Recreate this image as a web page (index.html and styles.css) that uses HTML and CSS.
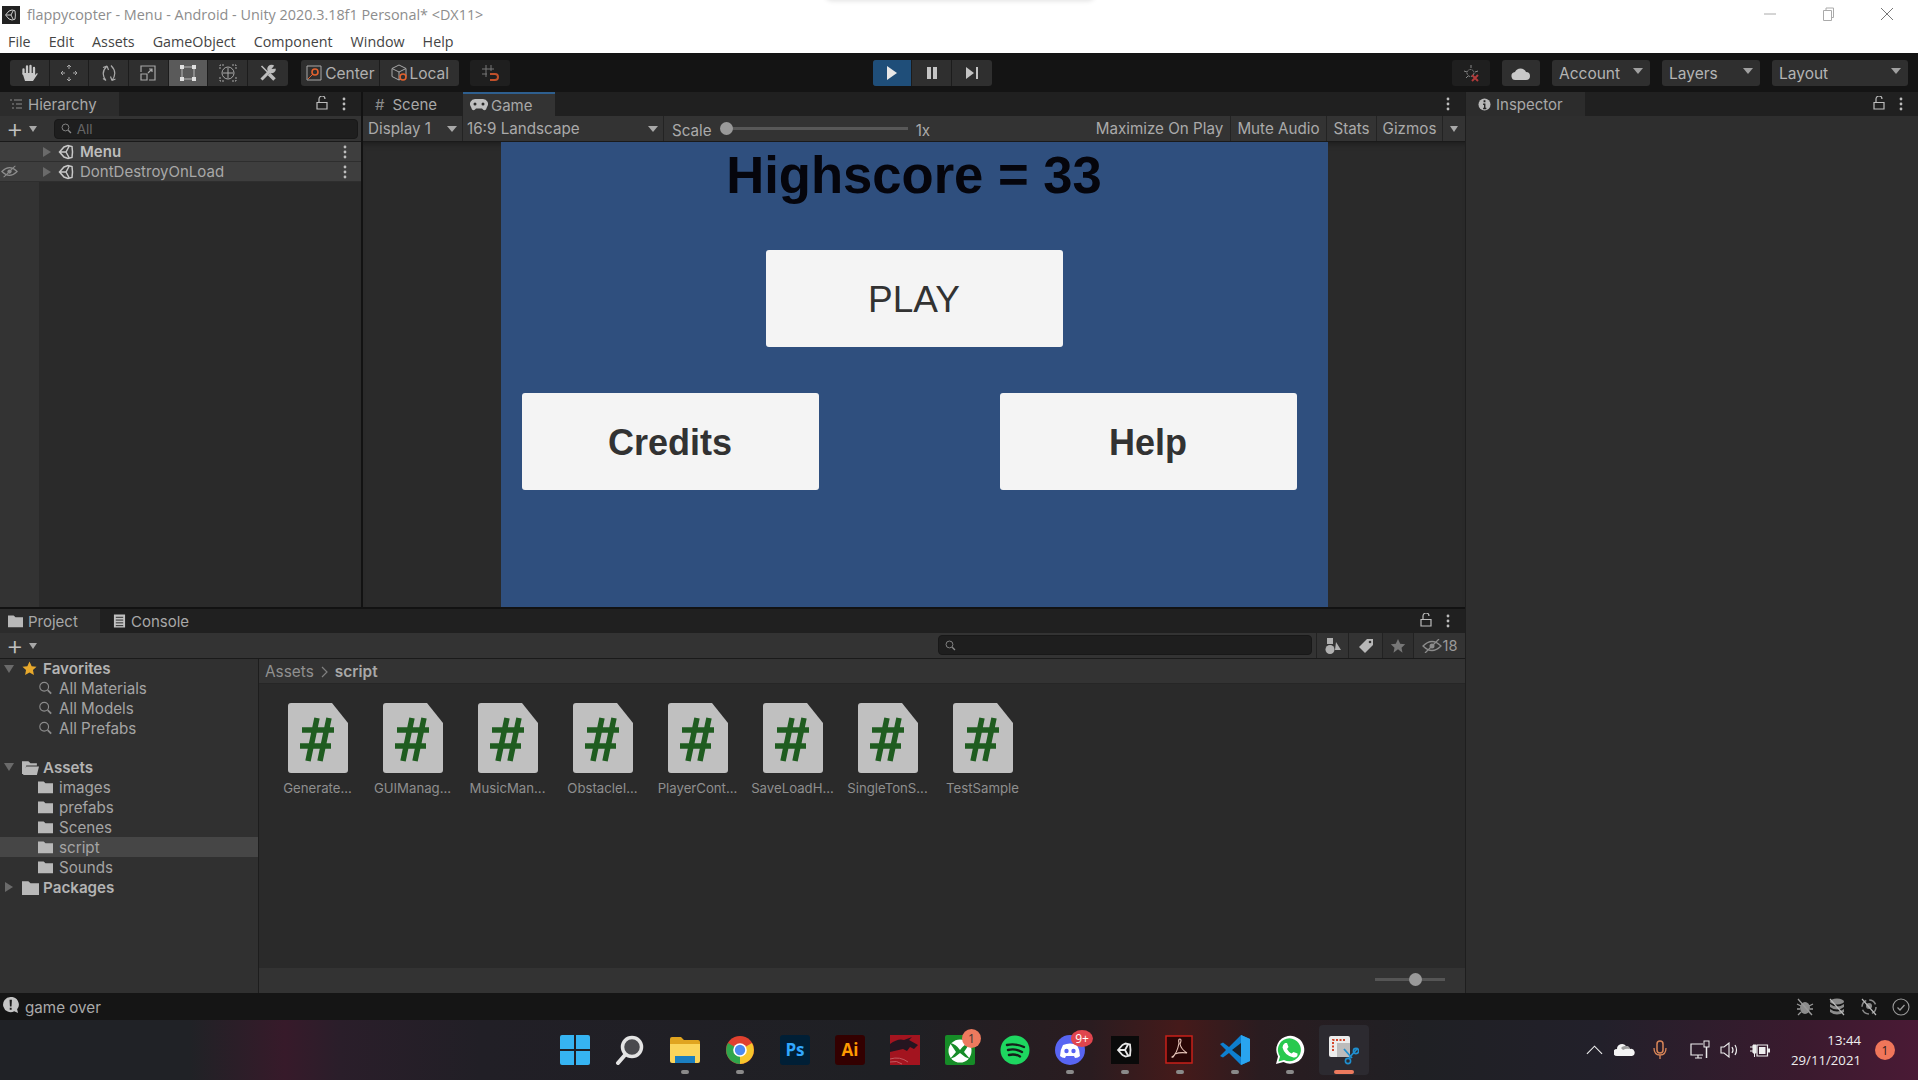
FILE: index.html
```html
<!DOCTYPE html>
<html lang="en">
<head>
  <meta charset="UTF-8" />
  <title>flappycopter - Menu - Android - Unity 2020.3.18f1 Personal* &lt;DX11&gt;</title>
  <link rel="stylesheet" href="styles.css">
</head>
<body>
  <svg class="defs" width="0" height="0">
    <symbol id="folder" viewBox="0 0 16 14"><path d="M0 1h6l2 2h8v11H0z" fill="#b8b8b8"/></symbol>
    <symbol id="find" viewBox="0 0 16 16"><circle cx="6.5" cy="6.5" r="5" fill="none" stroke="#8c8c8c" stroke-width="1.3"/><path d="M10.5 10.5l4 4" stroke="#8c8c8c" stroke-width="2"/></symbol>
    <symbol id="script" viewBox="0 0 60 70">
      <path d="M3 0h41l16 20v47a3 3 0 0 1-3 3H3a3 3 0 0 1-3-3V3a3 3 0 0 1 3-3z" fill="#c0c0c0"/>
      <path d="M14 27h32M12 43h31M29 15l-9 43M41 15l-9 43" stroke="#1f5c20" stroke-width="5.5" fill="none"/>
    </symbol>
    <symbol id="unity" viewBox="0 0 16 16"><path d="M1.5 8L6 3l4-1.500 4 1 .5 5.500-.5 5.500-4 1L6 13zM2 8h6l3-5.500M8 8l3 5.500" fill="none" stroke="#c8c8c8" stroke-width="1.5"/></symbol>
    <symbol id="dots" viewBox="0 0 4 14"><circle cx="2" cy="2" r="1.4" fill="#bdbdbd"/><circle cx="2" cy="7" r="1.4" fill="#bdbdbd"/><circle cx="2" cy="12" r="1.4" fill="#bdbdbd"/></symbol>
    <symbol id="lock" viewBox="0 0 12 14"><path d="M3 6V3a3 3 0 0 1 6 0M1 6.500h10v6.500H1z" fill="none" stroke="#bdbdbd" stroke-width="1.2"/></symbol>
    <symbol id="eyeoff" viewBox="0 0 20 14"><path d="M1 7q9-9 18 0q-9 9-18 0z" fill="none" stroke="#8c8c8c" stroke-width="1.3"/><circle cx="10" cy="7" r="2.5" fill="#8c8c8c"/><path d="M3 14L17 0" stroke="#8c8c8c" stroke-width="1.3"/></symbol>
  </svg>

  <div class="shade"></div>

  <header class="titlebar">
    <svg class="appicon" viewBox="0 0 18 18"><rect width="18" height="18" fill="#222"/><path d="M3.5 9l3.500-4 3-1 3 .8.4 4.200-.4 4.200-3 .8-3-1zM4 9h5l2-4M9 9l2 4" fill="none" stroke="#ccc"/></svg>
    <span class="title">flappycopter - Menu - Android - Unity 2020.3.18f1 Personal* &lt;DX11&gt;</span>
    <div class="winbtns">
      <svg viewBox="0 0 14 14"><path d="M1 7h12" stroke="#aaa"/></svg>
      <svg viewBox="0 0 14 14"><path d="M1.5 3.500h8v10h-8zM4 3.500V1h7.500v9.500h-2" fill="none" stroke="#aaa"/></svg>
      <svg viewBox="0 0 14 14"><path d="M1 1l12 12M13 1L1 13" stroke="#777"/></svg>
    </div>
  </header>

  <nav class="menubar">
    <span>File</span><span>Edit</span><span>Assets</span><span>GameObject</span><span>Component</span><span>Window</span><span>Help</span>
  </nav>

  <div class="toolbar">
    <div class="btngroup">
      <div class="tool"><svg viewBox="0 0 18 18"><path d="M3.5 10V5.500M7 9V2.500M10.500 9V2M14 10V4" stroke="#c8c8c8" stroke-width="2.300" stroke-linecap="round"/><path d="M2.5 9h12.500v2l2-2 .8.800L13 17H5z" fill="#c8c8c8"/></svg></div>
      <div class="tool"><svg viewBox="0 0 18 18"><path d="M9 1v4M9 13v4M1 9h4M13 9h4M7 3l2-2 2 2M7 15l2 2 2-2M3 7L1 9l2 2M15 7l2 2-2 2" fill="none" stroke="#a8a8a8"/></svg></div>
      <div class="tool"><svg viewBox="0 0 18 18"><path d="M7 2Q0 9 6 16.500M11 1.500q7 7 1 15M7 2l1.500 4M7 2L3 3.500M6 16.500l-3-2M12 16.500l-1.500-4M12 16.500l3.500-1.500" fill="none" stroke="#a8a8a8" stroke-width="1.2"/></svg></div>
      <div class="tool"><svg viewBox="0 0 18 18"><path d="M2 8V2h14v14h-6M2 10h6v6H2zM9 9l4-4M10 5h3v3" fill="none" stroke="#a8a8a8" stroke-width="1.2"/></svg></div>
      <div class="tool on"><svg viewBox="0 0 18 18"><path d="M3 3h12v12H3z" fill="none" stroke="#d0d0d0" stroke-width=".8"/><path d="M1 1h4v4H1zM13 1h4v4h-4zM1 13h4v4H1zM13 13h4v4h-4z" fill="#e0e0e0"/></svg></div>
      <div class="tool"><svg viewBox="0 0 18 18"><circle cx="9" cy="9" r="6" fill="none" stroke="#a8a8a8"/><path d="M9 4v10M4 9h10" stroke="#a8a8a8"/><path d="M1 5V1h4M17 5V1h-4M17 13v4h-4M1 13v4h4" fill="none" stroke="#a8a8a8" stroke-dasharray="2 1"/></svg></div>
      <div class="tool"><svg viewBox="0 0 18 18"><path d="M11 7L2.500 15.500" stroke="#bcbcbc" stroke-width="3"/><circle cx="12.500" cy="5" r="4.300" fill="#bcbcbc"/><path d="M12.500 5l4-5 1.500 4.500z" fill="#2f2f2f"/><path d="M2.500 2l7 7" stroke="#bcbcbc" stroke-width="1.600"/><path d="M10 10l5.500 5.500" stroke="#bcbcbc" stroke-width="3.600"/></svg></div>
    </div>
    <div class="btngroup pivot">
      <div class="tool wide"><svg viewBox="0 0 18 18"><path d="M2 2h14v14H2z" fill="none" stroke="#a8a8a8"/><circle cx="10" cy="8" r="3" fill="none" stroke="#e4622e" stroke-width="1.6"/><path d="M3 15l5-5" stroke="#e4622e"/></svg>Center</div>
      <div class="tool wide"><svg viewBox="0 0 18 18"><path d="M9 1l7 3.500v8L9 16l-7-3.500v-8zM2 4.500L9 8l7-3.500M9 8v8" fill="none" stroke="#a8a8a8"/><circle cx="13" cy="13" r="3" fill="#2f2f2f" stroke="#e4622e" stroke-width="1.6"/></svg>Local</div>
    </div>
    <div class="btngroup snap">
      <div class="tool"><svg viewBox="0 0 18 18"><path d="M5 1v12M1 5h12M10 1v6M1 10h5" stroke="#777"/><path d="M9 10h5a2.500 2.500 0 0 1 0 6H9" fill="none" stroke="#c0502a" stroke-width="2"/></svg></div>
    </div>
    <div class="btngroup play">
      <div class="tool blue"><svg viewBox="0 0 14 14"><path d="M2 0l10 7-10 7z" fill="#e8e8e8"/></svg></div>
      <div class="tool"><svg viewBox="0 0 14 14"><path d="M2 1h4v12H2zM8 1h4v12H8z" fill="#c4c4c4"/></svg></div>
      <div class="tool"><svg viewBox="0 0 14 14"><path d="M1 1l8 6-8 6zM11 1h2v12h-2z" fill="#c4c4c4"/></svg></div>
    </div>
    <div class="rightbtns">
      <div class="tbtn square dim"><svg viewBox="0 0 18 18"><path d="M9 1v3M2 7l3 1M16 7l-3 1M4 14l2-2" stroke="#888"/><circle cx="8.500" cy="9" r="3.500" fill="none" stroke="#888" stroke-dasharray="2 1"/><path d="M10 11l6 6M16 11l-6 6" stroke="#b03a3a" stroke-width="2"/></svg></div>
      <div class="tbtn square"><svg viewBox="0 0 20 14"><path d="M5 14a4 4 0 0 1-1-8 6 6 0 0 1 11 0 4 4 0 0 1 0 8z" fill="#c8c8c8"/></svg></div>
      <div class="tbtn drop">Account</div>
      <div class="tbtn drop">Layers</div>
      <div class="tbtn drop layout">Layout</div>
    </div>
  </div>

  <div class="editor">
    <div class="leftside">
      <div class="toprow">
        <section class="panel hierarchy">
          <div class="tabs">
            <div class="tab active"><svg class="ic" viewBox="0 0 14 14"><path d="M1 3h2M5 3h8M3 7h2M7 7h6M3 11h2M7 11h6" stroke="#8c8c8c"/></svg>Hierarchy</div>
            <svg class="lock" viewBox="0 0 12 14"><use href="#lock"/></svg>
            <svg class="dots" viewBox="0 0 4 14"><use href="#dots"/></svg>
          </div>
          <div class="subbar">
            <span class="plus">+</span><span class="caret"></span>
            <div class="search"><svg viewBox="0 0 16 16"><use href="#find"/></svg>All</div>
          </div>
          <div class="hierbody">
            <div class="hrow">
              <span class="tri"></span><svg class="ic" viewBox="0 0 16 16"><use href="#unity"/></svg><b>Menu</b>
              <svg class="dots" viewBox="0 0 4 14"><use href="#dots"/></svg>
            </div>
            <div class="hrow">
              <svg class="eye" viewBox="0 0 20 14"><use href="#eyeoff"/></svg>
              <span class="tri"></span><svg class="ic" viewBox="0 0 16 16"><use href="#unity"/></svg>DontDestroyOnLoad
              <svg class="dots" viewBox="0 0 4 14"><use href="#dots"/></svg>
            </div>
          </div>
        </section>

        <section class="panel gamepanel">
          <div class="tabs">
            <div class="tab scene"><span class="hash">#</span>Scene</div>
            <div class="tab active game"><svg class="ic" viewBox="0 0 18 12"><path d="M5 0h8a5 5 0 0 1 4 8l-1 2.500q-2 2-4-1H6q-2 3-4 1L1 8a5 5 0 0 1 4-8z" fill="#c0c0c0"/><circle cx="5" cy="5" r="1.500" fill="#2b2b2b"/><circle cx="13" cy="5" r="1.500" fill="#2b2b2b"/></svg>Game</div>
            <svg class="dots pushright" viewBox="0 0 4 14"><use href="#dots"/></svg>
          </div>
          <div class="subbar gamebar">
            <div class="gdrop display">Display 1</div>
            <div class="gdrop aspect">16:9 Landscape</div>
            <div class="scale"><span>Scale</span><div class="track"><i></i></div><span>1x</span></div>
            <div class="gbtn max">Maximize On Play</div>
            <div class="gbtn mute">Mute Audio</div>
            <div class="gbtn stats">Stats</div>
            <div class="gbtn gizmos">Gizmos</div>
            <div class="gbtn arrow"><span class="caret"></span></div>
          </div>
          <div class="letterbox">
            <div class="gameview">
              <h2 class="score">Highscore = 33</h2>
              <div class="gamebtn playbtn">PLAY</div>
              <div class="btnrow">
                <div class="gamebtn bold">Credits</div>
                <div class="gamebtn bold">Help</div>
              </div>
            </div>
          </div>
        </section>
      </div>

      <section class="panel project">
        <div class="tabs">
          <div class="tab active proj"><svg class="ic" viewBox="0 0 16 14"><use href="#folder"/></svg>Project</div>
          <div class="tab console"><svg class="ic" viewBox="0 0 14 14"><path d="M1 0h12v14H1z" fill="#c0c0c0"/><path d="M3 3h8M3 6h8M3 9h8M3 12h8" stroke="#202020"/></svg>Console</div>
          <svg class="lock" viewBox="0 0 12 14"><use href="#lock"/></svg>
          <svg class="dots" viewBox="0 0 4 14"><use href="#dots"/></svg>
        </div>
        <div class="subbar projbar">
          <span class="plus">+</span><span class="caret"></span>
          <div class="search wide"><svg viewBox="0 0 16 16"><use href="#find"/></svg></div>
          <div class="pbtn b1"><svg viewBox="0 0 16 16"><path d="M2 0h6v6H2z" fill="#b0b0b0"/><circle cx="5" cy="11.500" r="4.500" fill="#b0b0b0"/><path d="M11 4l5 8h-6z" fill="#b0b0b0"/></svg></div>
          <div class="pbtn b2"><svg viewBox="0 0 16 16"><path d="M1 9l8-8h6v6l-8 8z" fill="#b8b8b8"/><circle cx="12" cy="4" r="1.300" fill="#333"/></svg></div>
          <div class="pbtn b3"><svg viewBox="0 0 16 16"><path d="M8 1l2.200 4.700 5 .6-3.700 3.400 1 5L8 11.200 3.500 14.700l1-5L.8 6.300l5-.6z" fill="#777"/></svg></div>
          <div class="pbtn b4"><svg viewBox="0 0 20 14"><use href="#eyeoff"/></svg>18</div>
        </div>
        <div class="projmain">
          <aside class="tree">
            <div class="titem top"><span class="tri down"></span><svg class="star" viewBox="0 0 16 16"><path d="M8 .5l2.300 5 5.200.6-3.800 3.600 1 5.300L8 12.300 3.300 15l1-5.300L.5 6.100l5.200-.6z" fill="#e8a92c"/></svg><b>Favorites</b></div>
            <div class="titem sub"><svg viewBox="0 0 16 16"><use href="#find"/></svg>All Materials</div>
            <div class="titem sub"><svg viewBox="0 0 16 16"><use href="#find"/></svg>All Models</div>
            <div class="titem sub"><svg viewBox="0 0 16 16"><use href="#find"/></svg>All Prefabs</div>
            <div class="titem top spaced"><span class="tri down"></span><svg class="bigf" viewBox="0 0 16 14"><path d="M0 1h6l2 2h6v2H4L2 13H0zM4 6h12l-2 8H1z" fill="#b8b8b8"/></svg><b>Assets</b></div>
            <div class="titem sub"><svg viewBox="0 0 16 14"><use href="#folder"/></svg>images</div>
            <div class="titem sub"><svg viewBox="0 0 16 14"><use href="#folder"/></svg>prefabs</div>
            <div class="titem sub"><svg viewBox="0 0 16 14"><use href="#folder"/></svg>Scenes</div>
            <div class="titem sub sel"><svg viewBox="0 0 16 14"><use href="#folder"/></svg>script</div>
            <div class="titem sub"><svg viewBox="0 0 16 14"><use href="#folder"/></svg>Sounds</div>
            <div class="titem top"><span class="tri"></span><svg class="bigf" viewBox="0 0 16 14"><use href="#folder"/></svg><b>Packages</b></div>
          </aside>
          <div class="assets">
            <div class="crumbs">Assets<svg viewBox="0 0 8 12"><path d="M1 1l5 5-5 5" fill="none" stroke="#808080" stroke-width="1.2"/></svg><b>script</b></div>
            <div class="grid">
              <div class="asset"><svg viewBox="0 0 60 70"><use href="#script"/></svg><span>Generate...</span></div>
              <div class="asset"><svg viewBox="0 0 60 70"><use href="#script"/></svg><span>GUIManag...</span></div>
              <div class="asset"><svg viewBox="0 0 60 70"><use href="#script"/></svg><span>MusicMan...</span></div>
              <div class="asset"><svg viewBox="0 0 60 70"><use href="#script"/></svg><span>ObstacleI...</span></div>
              <div class="asset"><svg viewBox="0 0 60 70"><use href="#script"/></svg><span>PlayerCont...</span></div>
              <div class="asset"><svg viewBox="0 0 60 70"><use href="#script"/></svg><span>SaveLoadH...</span></div>
              <div class="asset"><svg viewBox="0 0 60 70"><use href="#script"/></svg><span>SingleTonS...</span></div>
              <div class="asset"><svg viewBox="0 0 60 70"><use href="#script"/></svg><span>TestSample</span></div>
            </div>
            <div class="assetfoot"><div class="zoomtrack"><i></i></div></div>
          </div>
        </div>
      </section>
    </div>

    <section class="panel inspector">
      <div class="tabs">
        <div class="tab active insp"><svg class="ic" viewBox="0 0 14 14"><circle cx="7" cy="7" r="6.500" fill="#b8b8b8"/><path d="M6 2.500h2v2H6zM5.500 6H8v4.500h1V12H5.500v-1.500h1V7.500h-1z" fill="#222"/></svg>Inspector</div>
        <svg class="lock" viewBox="0 0 12 14"><use href="#lock"/></svg>
        <svg class="dots" viewBox="0 0 4 14"><use href="#dots"/></svg>
      </div>
    </section>
  </div>

  <footer class="statusbar">
    <svg class="msg" viewBox="0 0 18 18"><path d="M9 0a8 8 0 1 0 4 15l4 2-1-4A8 8 0 0 0 9 0z" fill="#c4c4c4"/><path d="M8 3h2.500l-.4 7H8.400zM8.200 11.500h2v2h-2z" fill="#1a1a1a"/></svg>
    <span>game over</span>
    <div class="statusicons">
      <svg viewBox="0 0 18 18"><ellipse cx="9" cy="10" rx="5" ry="6" fill="#8c8c8c"/><path d="M1 6l4 2M17 6l-4 2M1 11h3M17 11h-3M2 17l3-3M16 17l-3-3M2 1l14 16" stroke="#9a9a9a" stroke-width="1.3"/></svg>
      <svg viewBox="0 0 18 18"><ellipse cx="9" cy="3.500" rx="7" ry="3" fill="#8c8c8c"/><path d="M2 6q7 5 14 0v3q-7 5-14 0zM2 11q7 5 14 0v3q-7 5-14 0z" fill="#8c8c8c"/><path d="M2 1l14 16" stroke="#bbb" stroke-width="1.2"/></svg>
      <svg viewBox="0 0 18 18"><circle cx="9" cy="9" r="7" fill="none" stroke="#8c8c8c" stroke-width="1.5" stroke-dasharray="8 3"/><circle cx="9" cy="8" r="3" fill="#8c8c8c"/><path d="M2 1l14 16" stroke="#bbb" stroke-width="1.2"/></svg>
      <svg viewBox="0 0 18 18"><circle cx="9" cy="9" r="8" fill="none" stroke="#9a9a9a" stroke-width="1.1"/><path d="M5.500 9.500L8 12l4.500-5" fill="none" stroke="#9a9a9a" stroke-width="1.3"/></svg>
    </div>
  </footer>

  <div class="taskbar">
    <div class="tbicon"><svg viewBox="0 0 30 30"><path d="M0 2q0-2 2-2h12v14H0zM16 0h12q2 0 2 2v12H16zM0 16h14v14H2q-2 0-2-2zM16 16h14v12q0 2-2 2H16z" fill="#36b4f2"/></svg></div>
    <div class="tbicon"><svg viewBox="0 0 30 30"><circle cx="17" cy="12" r="9.500" fill="#4a4a4e" stroke="#e4e4e4" stroke-width="3.5"/><path d="M10 20L3 28" stroke="#e4e4e4" stroke-width="4" stroke-linecap="round"/></svg></div>
    <div class="tbicon run"><svg viewBox="0 0 30 30"><path d="M0 4q0-2 2-2h9l3 3h14q2 0 2 2v3H0z" fill="#e0a420"/><path d="M0 9h30v17q0 2-2 2H2q-2 0-2-2z" fill="#fbd55c"/><path d="M5 21h20v7H5z" fill="#1b7fc0"/></svg></div>
    <div class="tbicon run"><svg viewBox="0 0 30 30"><circle cx="15" cy="15" r="14" fill="#e0412f"/><path d="M15 15L27 8A14 14 0 0 1 15 29z" fill="#f6c62c"/><path d="M15 15L15 29A14 14 0 0 1 3 8z" fill="#2fa64c"/><circle cx="15" cy="15" r="6.800" fill="#fff"/><circle cx="15" cy="15" r="5.200" fill="#4b8bf0"/></svg></div>
    <div class="tbicon"><svg viewBox="0 0 30 30"><rect width="30" height="30" rx="3" fill="#001f36"/><text x="15" y="21" class="logotxt ps">Ps</text></svg></div>
    <div class="tbicon"><svg viewBox="0 0 30 30"><rect width="30" height="30" rx="3" fill="#330000"/><text x="15" y="21" class="logotxt ai">Ai</text></svg></div>
    <div class="tbicon"><svg viewBox="0 0 30 30"><rect width="30" height="30" fill="#a3141f"/><path d="M0 9q8-6 14-4l8-3-3 3 9 5-4 4-4-2-3 4-4-2-13 3z" fill="#251520"/><path d="M0 24q10-3 18 3M0 27q7-2 12 2" stroke="#c35a60" fill="none"/></svg></div>
    <div class="tbicon"><svg viewBox="0 0 30 30"><rect width="30" height="30" rx="2" fill="#168c27"/><circle cx="15" cy="16" r="11.500" fill="#fff"/><path d="M5 8q6 1 10 7q4-6 10-7l-6 9 6 7q-6-2-10-6q-4 4-10 6l6-7z" fill="#168c27"/></svg><span class="badge one">1</span></div>
    <div class="tbicon"><svg viewBox="0 0 30 30"><circle cx="15" cy="15" r="14.500" fill="#1ed760"/><path d="M7 10q8-2 17 2M8 15q7-2 14 2M9 20q6-1.500 11 1.500" fill="none" stroke="#14201a" stroke-width="2.4" stroke-linecap="round"/></svg></div>
    <div class="tbicon run"><svg viewBox="0 0 30 30"><circle cx="15" cy="15" r="15" fill="#5865f2"/><path d="M8 10q7-3 14 0q3 5 3 11q-2 2-5 2l-1-2h-8l-1 2q-3 0-5-2q0-6 3-11z" fill="#fff"/><circle cx="11.500" cy="16" r="2.200" fill="#5865f2"/><circle cx="18.500" cy="16" r="2.200" fill="#5865f2"/></svg><span class="badge nine">9+</span></div>
    <div class="tbicon run"><svg viewBox="0 0 30 30"><rect width="28" height="28" x="1" y="1" fill="#0a0a0a"/><path d="M8 15l4.500-5 3-1.500 4.500 1 .5 5.500-.5 5.500-4.500 1-3-1.500zM8.500 15h6.500l3-5.500M15 15l3 5.500" fill="none" stroke="#e8e8e8" stroke-width="1.8"/></svg></div>
    <div class="tbicon run"><svg viewBox="0 0 30 30"><rect x="1" y="1" width="26" height="27" fill="#2a0606" stroke="#c9201a" stroke-width="1.5"/><path d="M7 22q5-3 7-14q-1-4 1-4t0 5q1 5 7 9q-7-1-12 1q-2 4-3 3z" fill="none" stroke="#e8c4b8" stroke-width="1.1"/></svg></div>
    <div class="tbicon run"><svg viewBox="0 0 30 30"><path d="M21 0l9 4v22l-9 4-12-12-6 4.500L0 21l6-6-6-6 3-1.500L9 12z" fill="#0e7fcf"/><path d="M21 0l9 4v22l-9 4z" fill="#29a4ef"/><path d="M21 8v14l-9-7z" fill="#1a2028"/></svg></div>
    <div class="tbicon run"><svg viewBox="0 0 30 30"><path d="M1 29l2-7.500A14 14 0 1 1 8.500 27z" fill="#fff"/><path d="M3.5 26.500l1.500-5A11.500 11.500 0 1 1 9 25z" fill="#28c94f"/><path d="M10 8l2 0 1.500 4-1.500 2q1.500 3 4.500 4.500l2-1.500 4 1.500 0 2q-1 2.500-4 2q-9-2-11-10q0-3 2.500-4.500z" fill="#fff"/></svg></div>
    <div class="tbicon current"><svg viewBox="0 0 30 30"><rect x="0" y="1" width="21" height="21" rx="2" fill="#ececec"/><path d="M4 16V5h12" fill="none" stroke="#d4472c" stroke-width="2" stroke-dasharray="2 1.500"/><rect x="8" y="8" width="13" height="14" fill="#bcbcbc"/><path d="M15 14l8 9M28 14l-8 9" stroke="#1f8fcf" stroke-width="1.8"/><circle cx="27" cy="16" r="2.600" fill="none" stroke="#1f8fcf" stroke-width="1.6"/><circle cx="19" cy="26" r="2.600" fill="none" stroke="#1f8fcf" stroke-width="1.6"/></svg></div>
    <div class="tray">
      <svg class="t1" viewBox="0 0 18 10"><path d="M1 9l8-8 8 8" fill="none" stroke="#eee" stroke-width="1.2"/></svg>
      <svg class="t2" viewBox="0 0 22 14"><path d="M3 13a3 3 0 0 1 0-7 5 5 0 0 1 9-3q3 0 4 3a3.500 3.500 0 0 1 2 7z" fill="#f4f4f4"/><path d="M7 5a5 5 0 0 1 5-2q3 0 4 3-4-1-7 1z" fill="#9c9c9c"/></svg>
      <svg class="t3" viewBox="0 0 14 20"><rect x="4" y="1" width="6" height="12" rx="3" fill="none" stroke="#d98658" stroke-width="1.5"/><path d="M1 8q0 7 6 7t6-7M7 15v4" fill="none" stroke="#d98658" stroke-width="1.3"/></svg>
      <svg class="t4" viewBox="0 0 20 20"><path d="M13 4H1v11h12M5 18h7M8 15v3" fill="none" stroke="#eee" stroke-width="1.2"/><rect x="14" y="1" width="5" height="6" fill="none" stroke="#eee"/><path d="M16.500 7v11" stroke="#eee" stroke-width="1.5"/></svg>
      <svg class="t5" viewBox="0 0 20 16"><path d="M1 5h3l5-4v14l-5-4H1z" fill="none" stroke="#eee" stroke-width="1.1"/><path d="M12 5q2 3 0 6M15 3q3 5 0 10" fill="none" stroke="#eee" stroke-width="1.2"/></svg>
      <svg class="t6" viewBox="0 0 20 17"><path d="M0 5h3M0 9h3M3 3h3v8H3zM4.500 11v4" stroke="#eee" fill="#eee"/><path d="M7 3h10.500v11H7z" fill="none" stroke="#eee" stroke-width="1.2"/><path d="M9 5h6.500v7H9zM18 6.500h2v4h-2z" fill="#eee"/></svg>
      <div class="clock"><span>13:44</span><span>29/11/2021</span></div>
      <span class="notif">1</span>
    </div>
  </div>
</body>
</html>
```

FILE: styles.css
```css
* {
  box-sizing: border-box;
}

html, body {
  margin: 0;
  height: 100%;
}

body {
  width: 1918px;
  height: 1080px;
  overflow: hidden;
  display: flex;
  flex-direction: column;
  position: relative;
  background: #141414;
  font-family: Inter, "Noto Sans", sans-serif;
  font-size: 15px;
  color: #b4b4b4;
}

svg {
  display: block;
  flex: none;
}

.defs {
  position: absolute;
}

.shade {
  position: absolute;
  left: 825px;
  top: -14px;
  width: 270px;
  height: 14px;
  border-radius: 7px;
  box-shadow: 0 1px 5px rgba(0, 0, 0, 0.12);
}

/* window chrome */
.titlebar {
  height: 29px;
  background: #fff;
  display: flex;
  align-items: center;
  padding-left: 2px;
}

.appicon {
  width: 18px;
  height: 18px;
  margin-right: 7px;
}

.title {
  font-family: "Open Sans", sans-serif;
  font-size: 14.4px;
  color: #8d8d8d;
}

.winbtns {
  margin-left: auto;
  display: flex;
  gap: 44.5px;
  padding: 0 24px 2px 0;
}

.winbtns svg {
  width: 14px;
  height: 14px;
}

.menubar {
  height: 24px;
  background: #fff;
  display: flex;
  padding-left: 8px;
  gap: 18px;
  font-family: "Open Sans", sans-serif;
  font-size: 14.3px;
  line-height: 25px;
  color: #444;
}

.toolbar {
  height: 39px;
  background: #141414;
  display: flex;
  align-items: center;
  padding: 1px 10px 0 10px;
  font-size: 15.5px;
}

.btngroup {
  display: flex;
  height: 26px;
  background: #2f2f2f;
  border-radius: 3px;
  overflow: hidden;
}

.tool {
  width: 39.7px;
  display: flex;
  align-items: center;
  justify-content: center;
  gap: 2px;
  border-right: 1px solid #1c1c1c;
  color: #b0b0b0;
}

.tool:last-child {
  border-right: 0;
}

.tool svg {
  width: 18px;
  height: 18px;
}

.tool.on {
  background: #5a5a5a;
}

.tool.wide {
  width: 79px;
}

.pivot {
  margin-left: 13px;
}

.snap {
  margin-left: 11px;
  background: #1f1f1f;
}

.play {
  margin-left: 363px;
}

.play .tool svg {
  width: 14px;
  height: 14px;
}

.tool.blue {
  background: #1f4e79;
}

.rightbtns {
  margin-left: auto;
  display: flex;
  gap: 12px;
}

.tbtn {
  height: 26px;
  width: 98px;
  background: #2f2f2f;
  border-radius: 3px;
  display: flex;
  align-items: center;
  padding-left: 7px;
  position: relative;
}

.tbtn.layout {
  width: 136px;
}

.tbtn.square {
  width: 38px;
  padding: 0;
  justify-content: center;
}

.tbtn.dim {
  background: #1f1f1f;
}

.tbtn svg {
  width: 20px;
  height: 18px;
}

.drop::after {
  content: "";
  position: absolute;
  right: 7px;
  top: 8px;
  border: 5px solid transparent;
  border-top: 6px solid #a0a0a0;
  border-bottom: 0;
}

/* panels */
.editor {
  height: 901px;
  display: flex;
}

.leftside {
  width: 1465px;
  display: flex;
  flex-direction: column;
  background: #121212;
}

.toprow {
  height: 515px;
  display: flex;
  gap: 2px;
}

.panel {
  display: flex;
  flex-direction: column;
  background: #2a2a2a;
}

.tabs {
  height: 24px;
  background: #202020;
  display: flex;
  align-items: stretch;
  flex: none;
  padding-right: 15px;
}

.tab {
  display: flex;
  align-items: center;
  color: #a8a8a8;
  font-size: 15px;
}

.tab.active {
  background: #2c2c2c;
}

.tab .ic {
  margin-right: 5px;
}

.tabs .lock {
  width: 12px;
  height: 14px;
  margin: 4px 0 0 auto;
}

.tabs .dots {
  width: 4px;
  height: 14px;
  margin: 5px 0 0 14px;
}

.tabs .dots.pushright {
  margin-left: auto;
}

.hierarchy {
  width: 361px;
}

.hierarchy .tab {
  width: 119px;
  padding-left: 9px;
}

.hierarchy .tab .ic {
  width: 14px;
  height: 14px;
}

.subbar {
  height: 26px;
  background: #333;
  display: flex;
  align-items: center;
  flex: none;
  border-bottom: 1px solid #1a1a1a;
  position: relative;
}

.plus {
  font-size: 27px;
  font-weight: 300;
  line-height: 24px;
  margin-left: 6px;
  color: #c0c0c0;
}

.caret {
  margin-left: 5px;
  border: 4.5px solid transparent;
  border-top: 6px solid #a8a8a8;
  border-bottom: 0;
}

.search {
  margin-left: 17px;
  width: 304px;
  height: 20px;
  background: #1e1e1e;
  border-radius: 4px;
  border: 1px solid #181818;
  display: flex;
  align-items: center;
  gap: 5px;
  padding-left: 6px;
  font-size: 13.5px;
  color: #666;
}

.search svg {
  width: 11px;
  height: 11px;
}

.hierbody {
  flex: 1;
  background: linear-gradient(to right, #333 39px, #2a2a2a 39px);
}

.hrow {
  height: 20px;
  background: #3e3e3e;
  display: flex;
  align-items: center;
  padding-left: 43px;
  position: relative;
  border-bottom: 1px solid #2e2e2e;
  font-size: 15px;
  color: #a8a8a8;
}

.hrow b {
  color: #bdbdbd;
  font-weight: 600;
}

.hrow .tri {
  margin-right: 7px;
}

.hrow .ic {
  width: 16px;
  height: 16px;
  margin-right: 6px;
}

.hrow .eye {
  position: absolute;
  left: 1px;
  top: 3px;
  width: 17px;
  height: 13px;
}

.hrow .dots {
  position: absolute;
  right: 14px;
  top: 3px;
  width: 4px;
  height: 14px;
}

.tri {
  width: 0;
  height: 0;
  border: 5px solid transparent;
  border-left: 8px solid #6a6a6a;
  border-right: 0;
}

.tri.down {
  border: 5px solid transparent;
  border-top: 8px solid #6a6a6a;
  border-bottom: 0;
}

.gamepanel {
  flex: 1;
}

.gamepanel .tab.scene {
  width: 100px;
  padding-left: 12px;
}

.hash {
  margin-right: 8px;
  font-size: 15px;
  color: #8c8c8c;
}

.tab.game {
  width: 92px;
  padding-left: 7px;
  border-top: 2px solid #2e5f8f;
  background: #333;
}

.tab.game .ic {
  width: 18px;
  height: 12px;
  margin-right: 3px;
}

.gamebar {
  align-items: stretch;
  font-size: 15.2px;
  color: #aaa;
}

.gdrop, .gbtn {
  display: flex;
  align-items: center;
  border-right: 1px solid #232323;
  position: relative;
}

.gdrop {
  padding-left: 5px;
}

.gdrop::after {
  content: "";
  position: absolute;
  right: 5px;
  top: 10px;
  border: 5px solid transparent;
  border-top: 6px solid #a8a8a8;
  border-bottom: 0;
}

.display {
  width: 100px;
}

.aspect {
  width: 201px;
  padding-left: 4px;
}

.scale {
  width: 425px;
  display: flex;
  align-items: center;
  padding: 3px 0 0 8px;
}

.track {
  width: 182px;
  height: 3px;
  margin: -4px 8px 0 14px;
  background: #585858;
  position: relative;
}

.track i {
  position: absolute;
  left: -6px;
  top: -5px;
  width: 13px;
  height: 13px;
  border-radius: 50%;
  background: #999;
}

.gbtn {
  justify-content: center;
}

.max {
  width: 142px;
}

.mute {
  width: 96px;
}

.stats {
  width: 50px;
}

.gizmos {
  width: 66px;
}

.arrow {
  flex: 1;
  border-right: 0;
}

.arrow .caret {
  margin: 0;
}

.letterbox {
  flex: 1;
  display: flex;
  justify-content: center;
  background: #2a2a2a;
  box-shadow: inset 0 6px 6px -5px #1a1a1a;
}

.gameview {
  width: 827px;
  background: #2f4f7e;
  display: flex;
  flex-direction: column;
  align-items: center;
}

.score {
  margin: 0 0 42px;
  height: 66px;
  font-family: "Liberation Sans", Arial, sans-serif;
  font-size: 52.6px;
  font-weight: 700;
  line-height: 66px;
  color: #05050c;
}

.gamebtn {
  width: 297px;
  height: 97px;
  background: #f4f4f4;
  border-radius: 3px;
  display: flex;
  align-items: center;
  justify-content: center;
  padding-top: 3px;
  font-family: "Liberation Sans", Arial, sans-serif;
  font-size: 37px;
  color: #323232;
}

.gamebtn.bold {
  font-size: 36px;
  font-weight: 700;
}

.btnrow {
  width: 100%;
  margin-top: 46px;
  padding: 0 31px 0 21px;
  display: flex;
  justify-content: space-between;
}

/* project */
.project {
  flex: 1;
  margin-top: 2px;
}

.tab.proj {
  width: 100px;
  padding-left: 8px;
}

.tab.proj .ic {
  width: 15px;
  height: 14px;
  margin-right: 5px;
}

.tab.console {
  padding-left: 13px;
}

.tab.console .ic {
  width: 13px;
  height: 14px;
  margin-right: 5px;
}

.search.wide {
  margin-left: 0;
  position: absolute;
  left: 938px;
  top: 2px;
  width: 374px;
}

.pbtn {
  position: absolute;
  top: 0;
  height: 25px;
  display: flex;
  align-items: center;
  justify-content: center;
  border-left: 1px solid #222;
  font-size: 14.6px;
  color: #9a9a9a;
}

.pbtn svg {
  width: 16px;
  height: 16px;
}

.b1 {
  left: 1316px;
  width: 32px;
}

.b2 {
  left: 1348px;
  width: 34px;
}

.b3 {
  left: 1382px;
  width: 31px;
  background: #2f2f2f;
}

.b4 {
  left: 1413px;
  width: 52px;
  gap: 1px;
}

.b4 svg {
  width: 20px;
  height: 14px;
}

.projmain {
  flex: 1;
  display: flex;
}

.tree {
  width: 258px;
  background: #303030;
  font-size: 15.2px;
  color: #a4a4a4;
  border-right: 1px solid #1d1d1d;
  box-sizing: content-box;
}

.titem {
  height: 20px;
  display: flex;
  align-items: center;
}

.titem:first-child {
  height: 19px;
}

.titem.top {
  padding-left: 4px;
}

.titem b {
  font-weight: 600;
  color: #b4b4b4;
}

.titem .tri {
  width: 10px;
  margin-right: 8px;
}

.titem .tri:not(.down) {
  margin-left: 1px;
  margin-right: 7px;
}

.star {
  width: 15px;
  height: 15px;
  margin-right: 6px;
}

.bigf {
  width: 17px;
  height: 15px;
  margin-right: 4px;
}

.spaced {
  margin-top: 19px;
}

.sub {
  padding-left: 38px;
}

.sub svg {
  width: 15px;
  height: 14px;
  margin-right: 6px;
}

.sel {
  background: #464646;
}

.assets {
  flex: 1;
  display: flex;
  flex-direction: column;
  background: #2a2a2a;
}

.crumbs {
  height: 25px;
  background: #333;
  border-bottom: 1px solid #262626;
  display: flex;
  align-items: center;
  padding: 1px 0 0 6px;
  font-size: 15.4px;
  color: #909090;
}

.crumbs svg {
  width: 8px;
  height: 12px;
  margin: 0 6px 0 7px;
}

.crumbs b {
  font-weight: 600;
  color: #a8a8a8;
}

.grid {
  flex: 1;
  display: flex;
  padding: 19px 0 0 11px;
}

.asset {
  width: 95px;
  display: flex;
  flex-direction: column;
  align-items: center;
  font-size: 13.2px;
  color: #8f8f8f;
}

.asset svg {
  width: 60px;
  height: 70px;
  margin-bottom: 7px;
}

.asset span {
  white-space: nowrap;
}

.assetfoot {
  height: 25px;
  background: #333;
  position: relative;
}

.zoomtrack {
  position: absolute;
  left: 1116px;
  top: 10px;
  width: 70px;
  height: 3px;
  background: #555;
}

.zoomtrack i {
  position: absolute;
  left: 34px;
  top: -5px;
  width: 13px;
  height: 13px;
  border-radius: 50%;
  background: #999;
}

.inspector {
  flex: 1;
  background: #2e2e2e;
  border-left: 1px solid #1e1e1e;
}

.tab.insp {
  width: 119px;
  padding-left: 12px;
}

.tab.insp .ic {
  width: 13px;
  height: 13px;
}

/* status */
.statusbar {
  height: 27px;
  background: #151515;
  display: flex;
  align-items: center;
  padding: 1px 0 0 2px;
  font-size: 15.2px;
  color: #aaa;
}

.msg {
  width: 17px;
  height: 17px;
  margin: -4px 6px 0 0;
}

.statusicons {
  margin-left: auto;
  display: flex;
  gap: 14px;
  padding-right: 8px;
}

.statusicons svg {
  width: 18px;
  height: 18px;
}

/* windows taskbar */
.taskbar {
  flex: 1;
  display: flex;
  align-items: center;
  padding-left: 547px;
  background: linear-gradient(to right, #202226 0, #202226 190px, #371a2a 285px, #2a1e2a 340px, #211f26 480px, #1f2024 900px, #2a1c20 1090px, #451a1a 1180px, #2a1c20 1260px, #1f2024 1420px, #22202a 1600px, #3a1a2e 1800px, #4a1a35 1918px);
}

.tbicon {
  width: 55px;
  height: 60px;
  display: flex;
  align-items: center;
  justify-content: center;
  position: relative;
}

.tbicon svg {
  width: 30px;
  height: 30px;
}

.tbicon.run::after, .tbicon.current::after {
  content: "";
  position: absolute;
  left: 23.5px;
  bottom: 6px;
  width: 8px;
  height: 4px;
  border-radius: 2px;
  background: #8a8a8a;
}

.tbicon.current {
  background: #2c2a30;
  border-radius: 4px;
  height: 50px;
  margin-top: -1px;
  width: 50px;
  margin-left: 2px;
}

.tbicon.current::after {
  left: 15px;
  width: 20px;
  background: #ec7a5e;
  bottom: 1px;
}

.logotxt {
  font-family: "Open Sans", sans-serif;
  font-size: 17px;
  font-weight: 700;
  text-anchor: middle;
}

.ps {
  fill: #31a8ff;
}

.ai {
  fill: #ff9a00;
}

.badge {
  position: absolute;
  background: #ec7a5e;
  border-radius: 50%;
  color: #333;
  font-family: "Open Sans", sans-serif;
  font-size: 12px;
  display: flex;
  align-items: center;
  justify-content: center;
}

.badge.one {
  left: 30px;
  top: 9px;
  width: 19px;
  height: 19px;
}

.badge.nine {
  left: 29px;
  top: 10px;
  width: 22px;
  height: 17px;
  background: #e0454e;
  color: #fff;
}

.tray {
  margin-left: auto;
  display: flex;
  align-items: center;
  padding-right: 23px;
}

.t1 {
  width: 17px;
  height: 10px;
}

.t2 {
  width: 22px;
  height: 14px;
  margin-left: 11px;
}

.t3 {
  width: 14px;
  height: 20px;
  margin-left: 17px;
}

.t4 {
  width: 20px;
  height: 20px;
  margin-left: 23px;
}

.t5 {
  width: 20px;
  height: 16px;
  margin-left: 10px;
}

.t6 {
  width: 20px;
  height: 17px;
  margin-left: 10px;
}

.clock {
  margin-left: 21px;
  display: flex;
  flex-direction: column;
  align-items: flex-end;
  font-family: "Open Sans", sans-serif;
  font-size: 13.2px;
  line-height: 20px;
  color: #eee;
}

.notif {
  margin-left: 14px;
  width: 20px;
  height: 20px;
  border-radius: 50%;
  background: #f0765a;
  color: #2a1a1a;
  font-family: "Open Sans", sans-serif;
  font-size: 12px;
  display: flex;
  align-items: center;
  justify-content: center;
}
```
